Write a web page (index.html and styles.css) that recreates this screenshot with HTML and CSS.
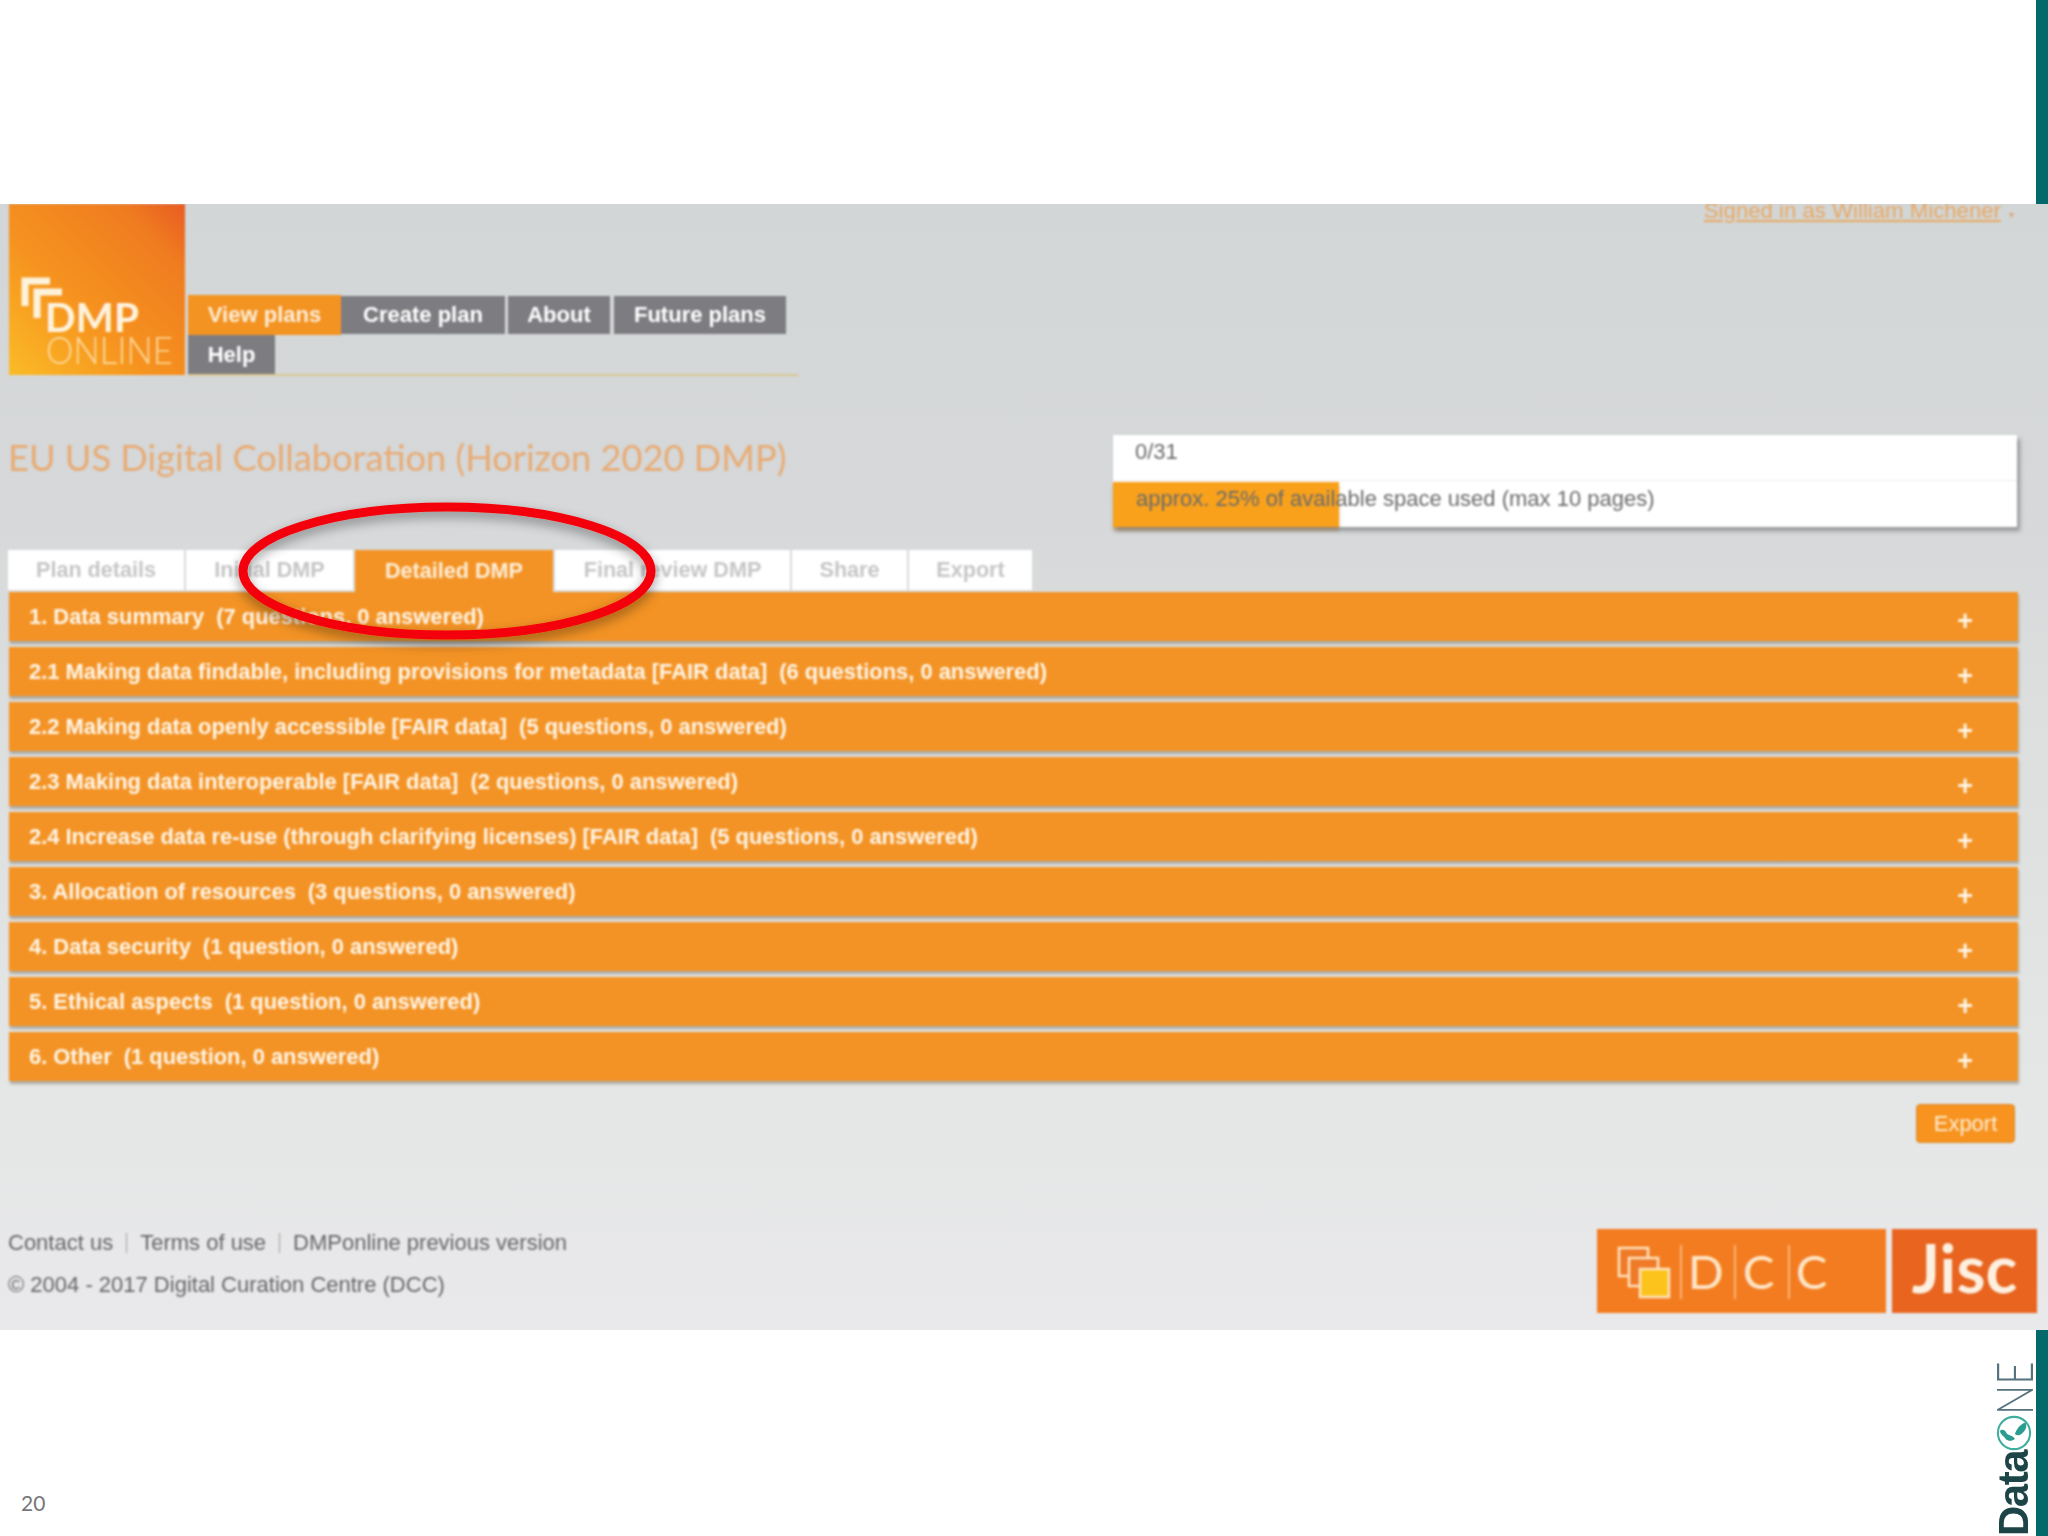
FILE: index.html
```html
<!DOCTYPE html>
<html lang="en">
<head>
<meta charset="utf-8">
<title>DMPonline slide</title>
<link rel="stylesheet" href="styles.css">
</head>
<body>
<div class="slide">
  <div class="slide-top"></div>
  <main class="shot">
    <div class="soft">
      <header class="site-head">
        <svg class="logo" viewBox="0 0 176 171" role="img" aria-label="DMP Online">
          <defs>
            <linearGradient id="logoGrad" x1="0" y1="1" x2="1" y2="0">
              <stop offset="0" stop-color="#fbbb26"/>
              <stop offset="0.4" stop-color="#f6931f"/>
              <stop offset="0.8" stop-color="#f07d20"/>
              <stop offset="1" stop-color="#e85c22"/>
            </linearGradient>
          </defs>
          <rect width="176" height="171" fill="url(#logoGrad)"/>
          <path class="logo-mark" d="M16 102V77H41M28 114V88H53"/>
          <text class="logo-dmp" x="36" y="128" textLength="94" lengthAdjust="spacingAndGlyphs">DMP</text>
          <text class="logo-online" x="37" y="160" textLength="127" lengthAdjust="spacingAndGlyphs">ONLINE</text>
        </svg>
        <nav class="nav">
          <a class="nav-item nav-active nav-view">View plans</a>
          <a class="nav-item nav-create">Create plan</a>
          <a class="nav-item nav-about">About</a>
          <a class="nav-item nav-future">Future plans</a>
          <a class="nav-item nav-help">Help</a>
        </nav>
        <div class="signed"><span class="signed-link">Signed in as William Michener</span><span class="caret">▾</span></div>
      </header>

      <section class="title-row">
        <h1 class="title">EU US Digital Collaboration (Horizon 2020 DMP)</h1>
        <div class="progress">
          <div class="progress-count">0/31</div>
          <div class="progress-space">
            <div class="progress-fill"></div>
            <span class="progress-text">approx. 25% of available space used (max 10 pages)</span>
          </div>
        </div>
      </section>

      <div class="tabs">
        <a class="tab tab-plan">Plan details</a>
        <a class="tab tab-initial">Initial DMP</a>
        <a class="tab tab-active">Detailed DMP</a>
        <a class="tab tab-final">Final review DMP</a>
        <a class="tab tab-share">Share</a>
        <a class="tab tab-export">Export</a>
      </div>

      <div class="sections">
        <div class="bar"><span>1. Data summary<span class="count">(7 questions, 0 answered)</span></span><b class="plus">+</b></div>
        <div class="bar"><span>2.1 Making data findable, including provisions for metadata [FAIR data]<span class="count">(6 questions, 0 answered)</span></span><b class="plus">+</b></div>
        <div class="bar"><span>2.2 Making data openly accessible [FAIR data]<span class="count">(5 questions, 0 answered)</span></span><b class="plus">+</b></div>
        <div class="bar"><span>2.3 Making data interoperable [FAIR data]<span class="count">(2 questions, 0 answered)</span></span><b class="plus">+</b></div>
        <div class="bar"><span>2.4 Increase data re-use (through clarifying licenses) [FAIR data]<span class="count">(5 questions, 0 answered)</span></span><b class="plus">+</b></div>
        <div class="bar"><span>3. Allocation of resources<span class="count">(3 questions, 0 answered)</span></span><b class="plus">+</b></div>
        <div class="bar"><span>4. Data security<span class="count">(1 question, 0 answered)</span></span><b class="plus">+</b></div>
        <div class="bar"><span>5. Ethical aspects<span class="count">(1 question, 0 answered)</span></span><b class="plus">+</b></div>
        <div class="bar"><span>6. Other<span class="count">(1 question, 0 answered)</span></span><b class="plus">+</b></div>
      </div>

      <div class="export-row"><a class="export-btn">Export</a></div>

      <footer class="site-foot">
        <div class="foot-text">
          <div class="foot-links"><a>Contact us</a><i class="sep"></i><a>Terms of use</a><i class="sep"></i><a>DMPonline previous version</a></div>
          <div class="foot-copy">© 2004 - 2017 Digital Curation Centre (DCC)</div>
        </div>
        <div class="foot-logos">
          <svg class="dcc" viewBox="0 0 289 84" role="img" aria-label="DCC">
            <rect width="289" height="84" fill="#f47c20"/>
            <rect class="dcc-sq dcc-back" x="22" y="19" width="29" height="28"/>
            <rect class="dcc-sq dcc-back" x="32" y="29" width="29" height="28"/>
            <rect class="dcc-sq dcc-front" x="43" y="40" width="29" height="28"/>
            <path class="dcc-rule" d="M84 16V70M138 16V70M192 16V70"/>
            <text class="dcc-letter" x="91" y="60">D</text>
            <text class="dcc-letter" x="146" y="60">C</text>
            <text class="dcc-letter" x="199" y="60">C</text>
          </svg>
          <div class="jisc">Jisc</div>
        </div>
      </footer>
    </div>
    <svg class="ring" viewBox="0 0 460 170" aria-hidden="true">
      <defs>
        <filter id="ringShadow" x="-10%" y="-20%" width="120%" height="150%">
          <feDropShadow dx="0" dy="5" stdDeviation="6" flood-color="#000" flood-opacity="0.4"/>
        </filter>
      </defs>
      <ellipse class="ring-line" cx="227" cy="80" rx="204" ry="64"/>
    </svg>
  </main>
  <div class="slide-bottom">
    <div class="page-no">20</div>
    <div class="dataone"><span class="d1-data">Data</span><svg class="d1-globe" viewBox="0 0 38 38" aria-hidden="true"><circle cx="19" cy="19" r="17" fill="none" stroke="#3fae9f" stroke-width="2.2"/><path d="M20 20C22 15 25 10 31 8C33 11 32 16 28 19C25 22 22 22 20 20ZM4 17C7 14 10 16 11 19C13 22 17 21 20 25C17 28 13 28 10 25C8 22 5 21 4 17Z" fill="#2a9d8f"/></svg><span class="d1-ne">NE</span></div>
  </div>
</div>
</body>
</html>
```
FILE: styles.css
```css
* { box-sizing: border-box; }
html, body { margin: 0; padding: 0; background: #fff; }
body { width: 2048px; height: 1536px; overflow: hidden; font-family: "Liberation Sans", Arial, sans-serif; }
a { color: inherit; text-decoration: none; }

.slide { display: flex; flex-direction: column; width: 2048px; height: 1536px; }
.slide-top { height: 204px; border-right: 12px solid #04696b; }
.slide-bottom {
  flex: 1; display: flex; justify-content: space-between; align-items: flex-end;
  border-right: 12px solid #04696b; padding-left: 21px;
}

.shot {
  position: relative; height: 1126px; overflow: hidden;
  background: linear-gradient(180deg, #d3d6d6 0, #d6d8d9 300px, #dddfdf 520px, #e5e6e6 900px, #e9e9eb 1126px);
}
.soft { filter: blur(0.8px); }

.site-head { display: flex; height: 171px; padding-left: 9px; }
.logo { width: 176px; height: 171px; flex: none; }
.logo-mark { fill: none; stroke: #fdf3dc; stroke-width: 7; }
.logo-dmp { font: 700 41px "Lato", sans-serif; fill: #fff3df; }
.logo-online { font: 300 37px "Lato", sans-serif; fill: #fcd99b; }

.nav {
  display: flex; flex-wrap: wrap; align-content: flex-start; width: 610px; height: 81px; margin: 91px 0 0 3px;
  border-bottom: 2px solid #d8c892;
}
.nav-item {
  display: flex; align-items: center; justify-content: center; height: 38px; margin-top: 1px;
  background: #7d7c80; color: #fff; font-weight: 700; font-size: 22px;
}
.nav-active { background: #f39322; color: #fdeed8; }
.nav-view { width: 153px; height: 40px; margin-top: 0; }
.nav-create { width: 164px; margin-right: 3px; }
.nav-about { width: 102px; margin-right: 4px; }
.nav-future { width: 172px; }
.nav-help { width: 87px; height: 39px; margin-top: 0; }

.signed { margin: -6px 34px 0 auto; font-size: 22.2px; line-height: 26px; color: #e8a862; white-space: nowrap; }
.signed-link { text-decoration: underline; }
.caret { margin-left: 8px; font-size: 10px; color: #d8a878; }

.title-row { display: flex; margin-top: 60px; }
.title {
  margin: 0 0 0 8px; font: 400 36.2px/44px "Lato", sans-serif; color: #e8ab74; white-space: nowrap;
}
.progress {
  width: 904px; height: 92px; margin-left: auto; margin-right: 31px;
  background: #fff; box-shadow: 3px 4px 4px rgba(90, 90, 95, .5);
  color: #6b6b6b; font-size: 22px;
}
.progress-count { height: 46px; padding-left: 22px; line-height: 34px; border-bottom: 1px solid #eceef0; }
.progress-space { position: relative; height: 46px; line-height: 36px; padding-left: 23px; }
.progress-fill { position: absolute; left: 0; top: 1px; bottom: 0; width: 226px; background: #f9a11b; box-shadow: 0 4px 3px rgba(150, 110, 60, .45); }
.progress-text { position: relative; }

.tabs { display: flex; gap: 2px; height: 40px; margin: 23px 0 2px; padding-left: 8px; }
.tab {
  display: flex; align-items: center; justify-content: center; background: #fff;
  color: #c6c6c6; font-weight: 700; font-size: 21.6px;
}
.tab-plan { width: 176px; }
.tab-initial { width: 167px; }
.tab-active { width: 198px; background: #f39325; color: #fdeed8; height: 42px; }
.tab-final { width: 235px; }
.tab-share { width: 115px; }
.tab-export { width: 123px; }

.sections { display: flex; flex-direction: column; gap: 6px; margin: 0 30px 0 9px; }
.bar {
  display: flex; justify-content: space-between; align-items: center; height: 49px;
  padding: 0 45px 0 20px; background: #f39325; color: #fff6e8; font-weight: 700; font-size: 21.9px;
  box-shadow: 1px 3px 2px rgba(130, 125, 110, .55);
}
.count { margin-left: 12px; }
.plus { font-size: 27px; line-height: 1; margin-top: 9px; }

.export-row { display: flex; justify-content: flex-end; margin-top: 23px; padding-right: 33px; }
.export-btn {
  display: flex; align-items: center; justify-content: center; width: 99px; height: 39px;
  background: #f7931e; border: 1px solid #d88a30; border-radius: 4px; color: #fdeed8; font-size: 22px;
}

.site-foot { display: flex; justify-content: space-between; margin-top: 86px; padding: 0 11px 17px 8px; }
.foot-text { margin-top: -7px; color: #666668; font-size: 22px; line-height: 42px; }
.foot-links { display: flex; align-items: center; white-space: nowrap; }
.sep { width: 1px; height: 20px; margin: 0 13px; background: #a0a0a0; }
.foot-logos { display: flex; gap: 6px; height: 84px; }
.dcc { width: 289px; height: 84px; }
.dcc-sq { stroke: #fde3c0; stroke-width: 2.5; }
.dcc-back { fill: #ef7a28; }
.dcc-front { fill: #fcc31c; }
.dcc-rule { stroke: #fbc991; stroke-width: 1.5; fill: none; }
.dcc-letter { font: 400 47px "Lato", sans-serif; fill: #fde6c8; }
.jisc {
  width: 145px; height: 84px; background: #e8641f; color: #fdf0e0; text-align: center;
  font: 700 66px/78px "Lato", sans-serif;
}

.ring { position: absolute; left: 220px; top: 287px; width: 460px; height: 170px; filter: url(#ringShadow); overflow: visible; }
.ring-line { fill: none; stroke: #f40009; stroke-width: 9; }

.page-no { margin-bottom: 23px; font: 400 21px/20px "Lato", sans-serif; color: #77767a; }

.dataone {
  display: flex; align-items: center; height: 176px; width: 40px; margin-right: 2px; margin-bottom: 0;
  writing-mode: vertical-rl; transform: rotate(180deg); justify-content: flex-start;
  filter: blur(0.5px);
}
.d1-data { font: 700 42px/40px "Liberation Sans", sans-serif; color: #1d4446; letter-spacing: -1.5px; }
.d1-globe { width: 36px; height: 36px; flex: none; margin: 0 1px; transform: rotate(180deg); }
.d1-ne { font: 300 40px/40px "Lato", sans-serif; color: #56727e; transform: scaleX(1.28); }
```
